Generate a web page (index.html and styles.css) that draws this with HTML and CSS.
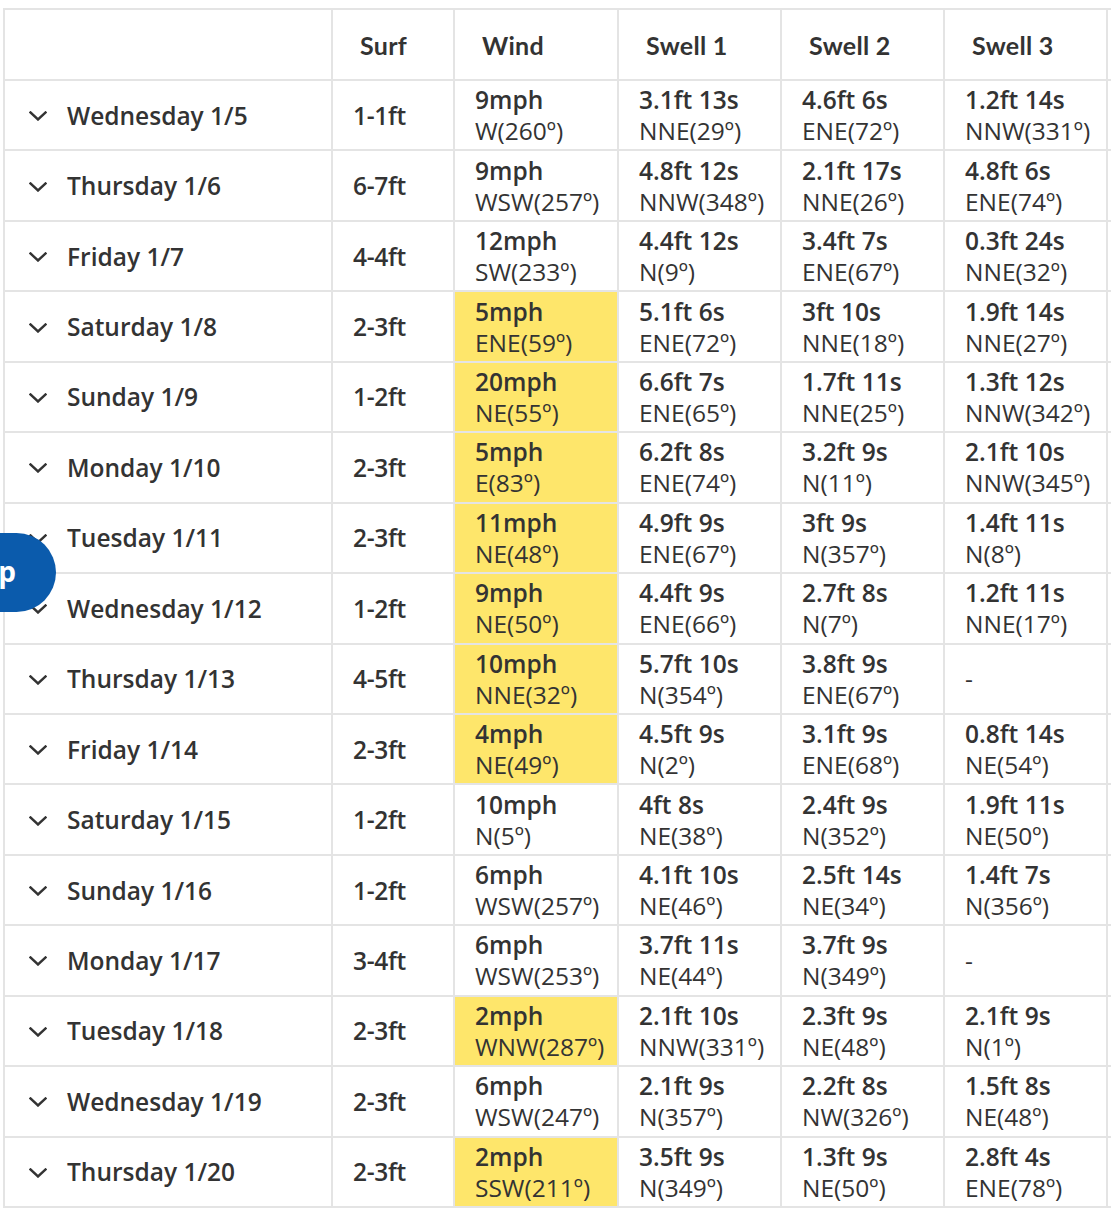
FILE: index.html
```html
<!DOCTYPE html>
<html lang="en">
<head>
<meta charset="utf-8">
<title>Surf forecast</title>
<link rel="stylesheet" href="styles.css">
</head>
<body>
<div class="page">
  <div class="forecast">
    <div class="cell head"></div>
    <div class="cell head">Surf</div>
    <div class="cell head">Wind</div>
    <div class="cell head">Swell 1</div>
    <div class="cell head">Swell 2</div>
    <div class="cell head">Swell 3</div>
    <div class="cell head extra"></div>

    <div class="cell day"><svg class="chev" viewBox="0 0 18 10"><path d="M1.5 1.5 L9 8.5 L16.5 1.5"/></svg>Wednesday 1/5</div>
    <div class="cell surf">1-1ft</div>
    <div class="cell data"><b>9mph</b><span>W(260º)</span></div>
    <div class="cell data"><b>3.1ft 13s</b><span>NNE(29º)</span></div>
    <div class="cell data"><b>4.6ft 6s</b><span>ENE(72º)</span></div>
    <div class="cell data"><b>1.2ft 14s</b><span>NNW(331º)</span></div>
    <div class="cell extra"></div>

    <div class="cell day"><svg class="chev" viewBox="0 0 18 10"><path d="M1.5 1.5 L9 8.5 L16.5 1.5"/></svg>Thursday 1/6</div>
    <div class="cell surf">6-7ft</div>
    <div class="cell data"><b>9mph</b><span>WSW(257º)</span></div>
    <div class="cell data"><b>4.8ft 12s</b><span>NNW(348º)</span></div>
    <div class="cell data"><b>2.1ft 17s</b><span>NNE(26º)</span></div>
    <div class="cell data"><b>4.8ft 6s</b><span>ENE(74º)</span></div>
    <div class="cell extra"></div>

    <div class="cell day"><svg class="chev" viewBox="0 0 18 10"><path d="M1.5 1.5 L9 8.5 L16.5 1.5"/></svg>Friday 1/7</div>
    <div class="cell surf">4-4ft</div>
    <div class="cell data"><b>12mph</b><span>SW(233º)</span></div>
    <div class="cell data"><b>4.4ft 12s</b><span>N(9º)</span></div>
    <div class="cell data"><b>3.4ft 7s</b><span>ENE(67º)</span></div>
    <div class="cell data"><b>0.3ft 24s</b><span>NNE(32º)</span></div>
    <div class="cell extra"></div>

    <div class="cell day"><svg class="chev" viewBox="0 0 18 10"><path d="M1.5 1.5 L9 8.5 L16.5 1.5"/></svg>Saturday 1/8</div>
    <div class="cell surf">2-3ft</div>
    <div class="cell data good"><b>5mph</b><span>ENE(59º)</span></div>
    <div class="cell data"><b>5.1ft 6s</b><span>ENE(72º)</span></div>
    <div class="cell data"><b>3ft 10s</b><span>NNE(18º)</span></div>
    <div class="cell data"><b>1.9ft 14s</b><span>NNE(27º)</span></div>
    <div class="cell extra"></div>

    <div class="cell day"><svg class="chev" viewBox="0 0 18 10"><path d="M1.5 1.5 L9 8.5 L16.5 1.5"/></svg>Sunday 1/9</div>
    <div class="cell surf">1-2ft</div>
    <div class="cell data good"><b>20mph</b><span>NE(55º)</span></div>
    <div class="cell data"><b>6.6ft 7s</b><span>ENE(65º)</span></div>
    <div class="cell data"><b>1.7ft 11s</b><span>NNE(25º)</span></div>
    <div class="cell data"><b>1.3ft 12s</b><span>NNW(342º)</span></div>
    <div class="cell extra"></div>

    <div class="cell day"><svg class="chev" viewBox="0 0 18 10"><path d="M1.5 1.5 L9 8.5 L16.5 1.5"/></svg>Monday 1/10</div>
    <div class="cell surf">2-3ft</div>
    <div class="cell data good"><b>5mph</b><span>E(83º)</span></div>
    <div class="cell data"><b>6.2ft 8s</b><span>ENE(74º)</span></div>
    <div class="cell data"><b>3.2ft 9s</b><span>N(11º)</span></div>
    <div class="cell data"><b>2.1ft 10s</b><span>NNW(345º)</span></div>
    <div class="cell extra"></div>

    <div class="cell day"><svg class="chev" viewBox="0 0 18 10"><path d="M1.5 1.5 L9 8.5 L16.5 1.5"/></svg>Tuesday 1/11</div>
    <div class="cell surf">2-3ft</div>
    <div class="cell data good"><b>11mph</b><span>NE(48º)</span></div>
    <div class="cell data"><b>4.9ft 9s</b><span>ENE(67º)</span></div>
    <div class="cell data"><b>3ft 9s</b><span>N(357º)</span></div>
    <div class="cell data"><b>1.4ft 11s</b><span>N(8º)</span></div>
    <div class="cell extra"></div>

    <div class="cell day"><svg class="chev" viewBox="0 0 18 10"><path d="M1.5 1.5 L9 8.5 L16.5 1.5"/></svg>Wednesday 1/12</div>
    <div class="cell surf">1-2ft</div>
    <div class="cell data good"><b>9mph</b><span>NE(50º)</span></div>
    <div class="cell data"><b>4.4ft 9s</b><span>ENE(66º)</span></div>
    <div class="cell data"><b>2.7ft 8s</b><span>N(7º)</span></div>
    <div class="cell data"><b>1.2ft 11s</b><span>NNE(17º)</span></div>
    <div class="cell extra"></div>

    <div class="cell day"><svg class="chev" viewBox="0 0 18 10"><path d="M1.5 1.5 L9 8.5 L16.5 1.5"/></svg>Thursday 1/13</div>
    <div class="cell surf">4-5ft</div>
    <div class="cell data good"><b>10mph</b><span>NNE(32º)</span></div>
    <div class="cell data"><b>5.7ft 10s</b><span>N(354º)</span></div>
    <div class="cell data"><b>3.8ft 9s</b><span>ENE(67º)</span></div>
    <div class="cell data none">-</div>
    <div class="cell extra"></div>

    <div class="cell day"><svg class="chev" viewBox="0 0 18 10"><path d="M1.5 1.5 L9 8.5 L16.5 1.5"/></svg>Friday 1/14</div>
    <div class="cell surf">2-3ft</div>
    <div class="cell data good"><b>4mph</b><span>NE(49º)</span></div>
    <div class="cell data"><b>4.5ft 9s</b><span>N(2º)</span></div>
    <div class="cell data"><b>3.1ft 9s</b><span>ENE(68º)</span></div>
    <div class="cell data"><b>0.8ft 14s</b><span>NE(54º)</span></div>
    <div class="cell extra"></div>

    <div class="cell day"><svg class="chev" viewBox="0 0 18 10"><path d="M1.5 1.5 L9 8.5 L16.5 1.5"/></svg>Saturday 1/15</div>
    <div class="cell surf">1-2ft</div>
    <div class="cell data"><b>10mph</b><span>N(5º)</span></div>
    <div class="cell data"><b>4ft 8s</b><span>NE(38º)</span></div>
    <div class="cell data"><b>2.4ft 9s</b><span>N(352º)</span></div>
    <div class="cell data"><b>1.9ft 11s</b><span>NE(50º)</span></div>
    <div class="cell extra"></div>

    <div class="cell day"><svg class="chev" viewBox="0 0 18 10"><path d="M1.5 1.5 L9 8.5 L16.5 1.5"/></svg>Sunday 1/16</div>
    <div class="cell surf">1-2ft</div>
    <div class="cell data"><b>6mph</b><span>WSW(257º)</span></div>
    <div class="cell data"><b>4.1ft 10s</b><span>NE(46º)</span></div>
    <div class="cell data"><b>2.5ft 14s</b><span>NE(34º)</span></div>
    <div class="cell data"><b>1.4ft 7s</b><span>N(356º)</span></div>
    <div class="cell extra"></div>

    <div class="cell day"><svg class="chev" viewBox="0 0 18 10"><path d="M1.5 1.5 L9 8.5 L16.5 1.5"/></svg>Monday 1/17</div>
    <div class="cell surf">3-4ft</div>
    <div class="cell data"><b>6mph</b><span>WSW(253º)</span></div>
    <div class="cell data"><b>3.7ft 11s</b><span>NE(44º)</span></div>
    <div class="cell data"><b>3.7ft 9s</b><span>N(349º)</span></div>
    <div class="cell data none">-</div>
    <div class="cell extra"></div>

    <div class="cell day"><svg class="chev" viewBox="0 0 18 10"><path d="M1.5 1.5 L9 8.5 L16.5 1.5"/></svg>Tuesday 1/18</div>
    <div class="cell surf">2-3ft</div>
    <div class="cell data good"><b>2mph</b><span>WNW(287º)</span></div>
    <div class="cell data"><b>2.1ft 10s</b><span>NNW(331º)</span></div>
    <div class="cell data"><b>2.3ft 9s</b><span>NE(48º)</span></div>
    <div class="cell data"><b>2.1ft 9s</b><span>N(1º)</span></div>
    <div class="cell extra"></div>

    <div class="cell day"><svg class="chev" viewBox="0 0 18 10"><path d="M1.5 1.5 L9 8.5 L16.5 1.5"/></svg>Wednesday 1/19</div>
    <div class="cell surf">2-3ft</div>
    <div class="cell data"><b>6mph</b><span>WSW(247º)</span></div>
    <div class="cell data"><b>2.1ft 9s</b><span>N(357º)</span></div>
    <div class="cell data"><b>2.2ft 8s</b><span>NW(326º)</span></div>
    <div class="cell data"><b>1.5ft 8s</b><span>NE(48º)</span></div>
    <div class="cell extra"></div>

    <div class="cell day"><svg class="chev" viewBox="0 0 18 10"><path d="M1.5 1.5 L9 8.5 L16.5 1.5"/></svg>Thursday 1/20</div>
    <div class="cell surf">2-3ft</div>
    <div class="cell data good"><b>2mph</b><span>SSW(211º)</span></div>
    <div class="cell data"><b>3.5ft 9s</b><span>N(349º)</span></div>
    <div class="cell data"><b>1.3ft 9s</b><span>NE(50º)</span></div>
    <div class="cell data"><b>2.8ft 4s</b><span>ENE(78º)</span></div>
    <div class="cell extra"></div>
  </div>
  <button class="help">Help</button>
</div>
</body>
</html>
```

FILE: styles.css
```css
* { box-sizing: border-box; }

html, body {
  margin: 0;
  padding: 0;
  background: #ffffff;
}

.page {
  position: relative;
  width: 1111px;
  height: 1219px;
  overflow: hidden;
  padding: 8px 0 0 3px;
  font-family: "Open Sans", "Noto Sans", "Liberation Sans", sans-serif;
  color: #333333;
}

.forecast {
  display: grid;
  grid-template-columns: 328px 122px 164px 163px 163px 163px 160px;
  grid-template-rows: 71px repeat(16, 70.44px);
  width: max-content;
  border-top: 2px solid #e4e4e4;
  border-left: 2px solid #e4e4e4;
}

.cell {
  border-right: 2px solid #e4e4e4;
  border-bottom: 2px solid #e4e4e4;
  display: flex;
  align-items: center;
  min-width: 0;
  white-space: nowrap;
}

.head {
  padding-left: 27px;
  font-family: "Lato", "Open Sans", sans-serif;
  font-size: 25px;
  font-weight: 700;
  color: #333333;
  letter-spacing: 0.3px;
}

.day {
  padding-left: 24px;
  font-size: 24.5px;
  font-weight: 600;
  color: #333333;
}

.chev {
  width: 18px;
  height: 10px;
  margin-right: 20px;
  margin-top: 2px;
  flex: none;
}

.chev path {
  fill: none;
  stroke: #333333;
  stroke-width: 2.4;
  stroke-linecap: square;
}

.surf {
  padding-left: 20px;
  font-size: 24.5px;
  font-weight: 600;
  letter-spacing: -0.3px;
}

.data {
  flex-direction: column;
  align-items: flex-start;
  justify-content: center;
  padding-left: 20px;
  font-size: 24.5px;
  line-height: 31px;
}

.data b {
  font-weight: 600;
}

.data span {
  font-weight: 400;
}

.data.good {
  background: #fee66b;
}

.extra {
  border-right: none;
}

.help {
  position: absolute;
  left: -104px;
  top: 533px;
  width: 160px;
  height: 79px;
  border: none;
  border-radius: 40px;
  background: #0b5bac;
  color: #ffffff;
  font-family: "Open Sans", sans-serif;
  font-size: 28px;
  font-weight: 700;
  display: flex;
  align-items: center;
  justify-content: flex-end;
  padding: 0 40px 4px 0;
}
```
